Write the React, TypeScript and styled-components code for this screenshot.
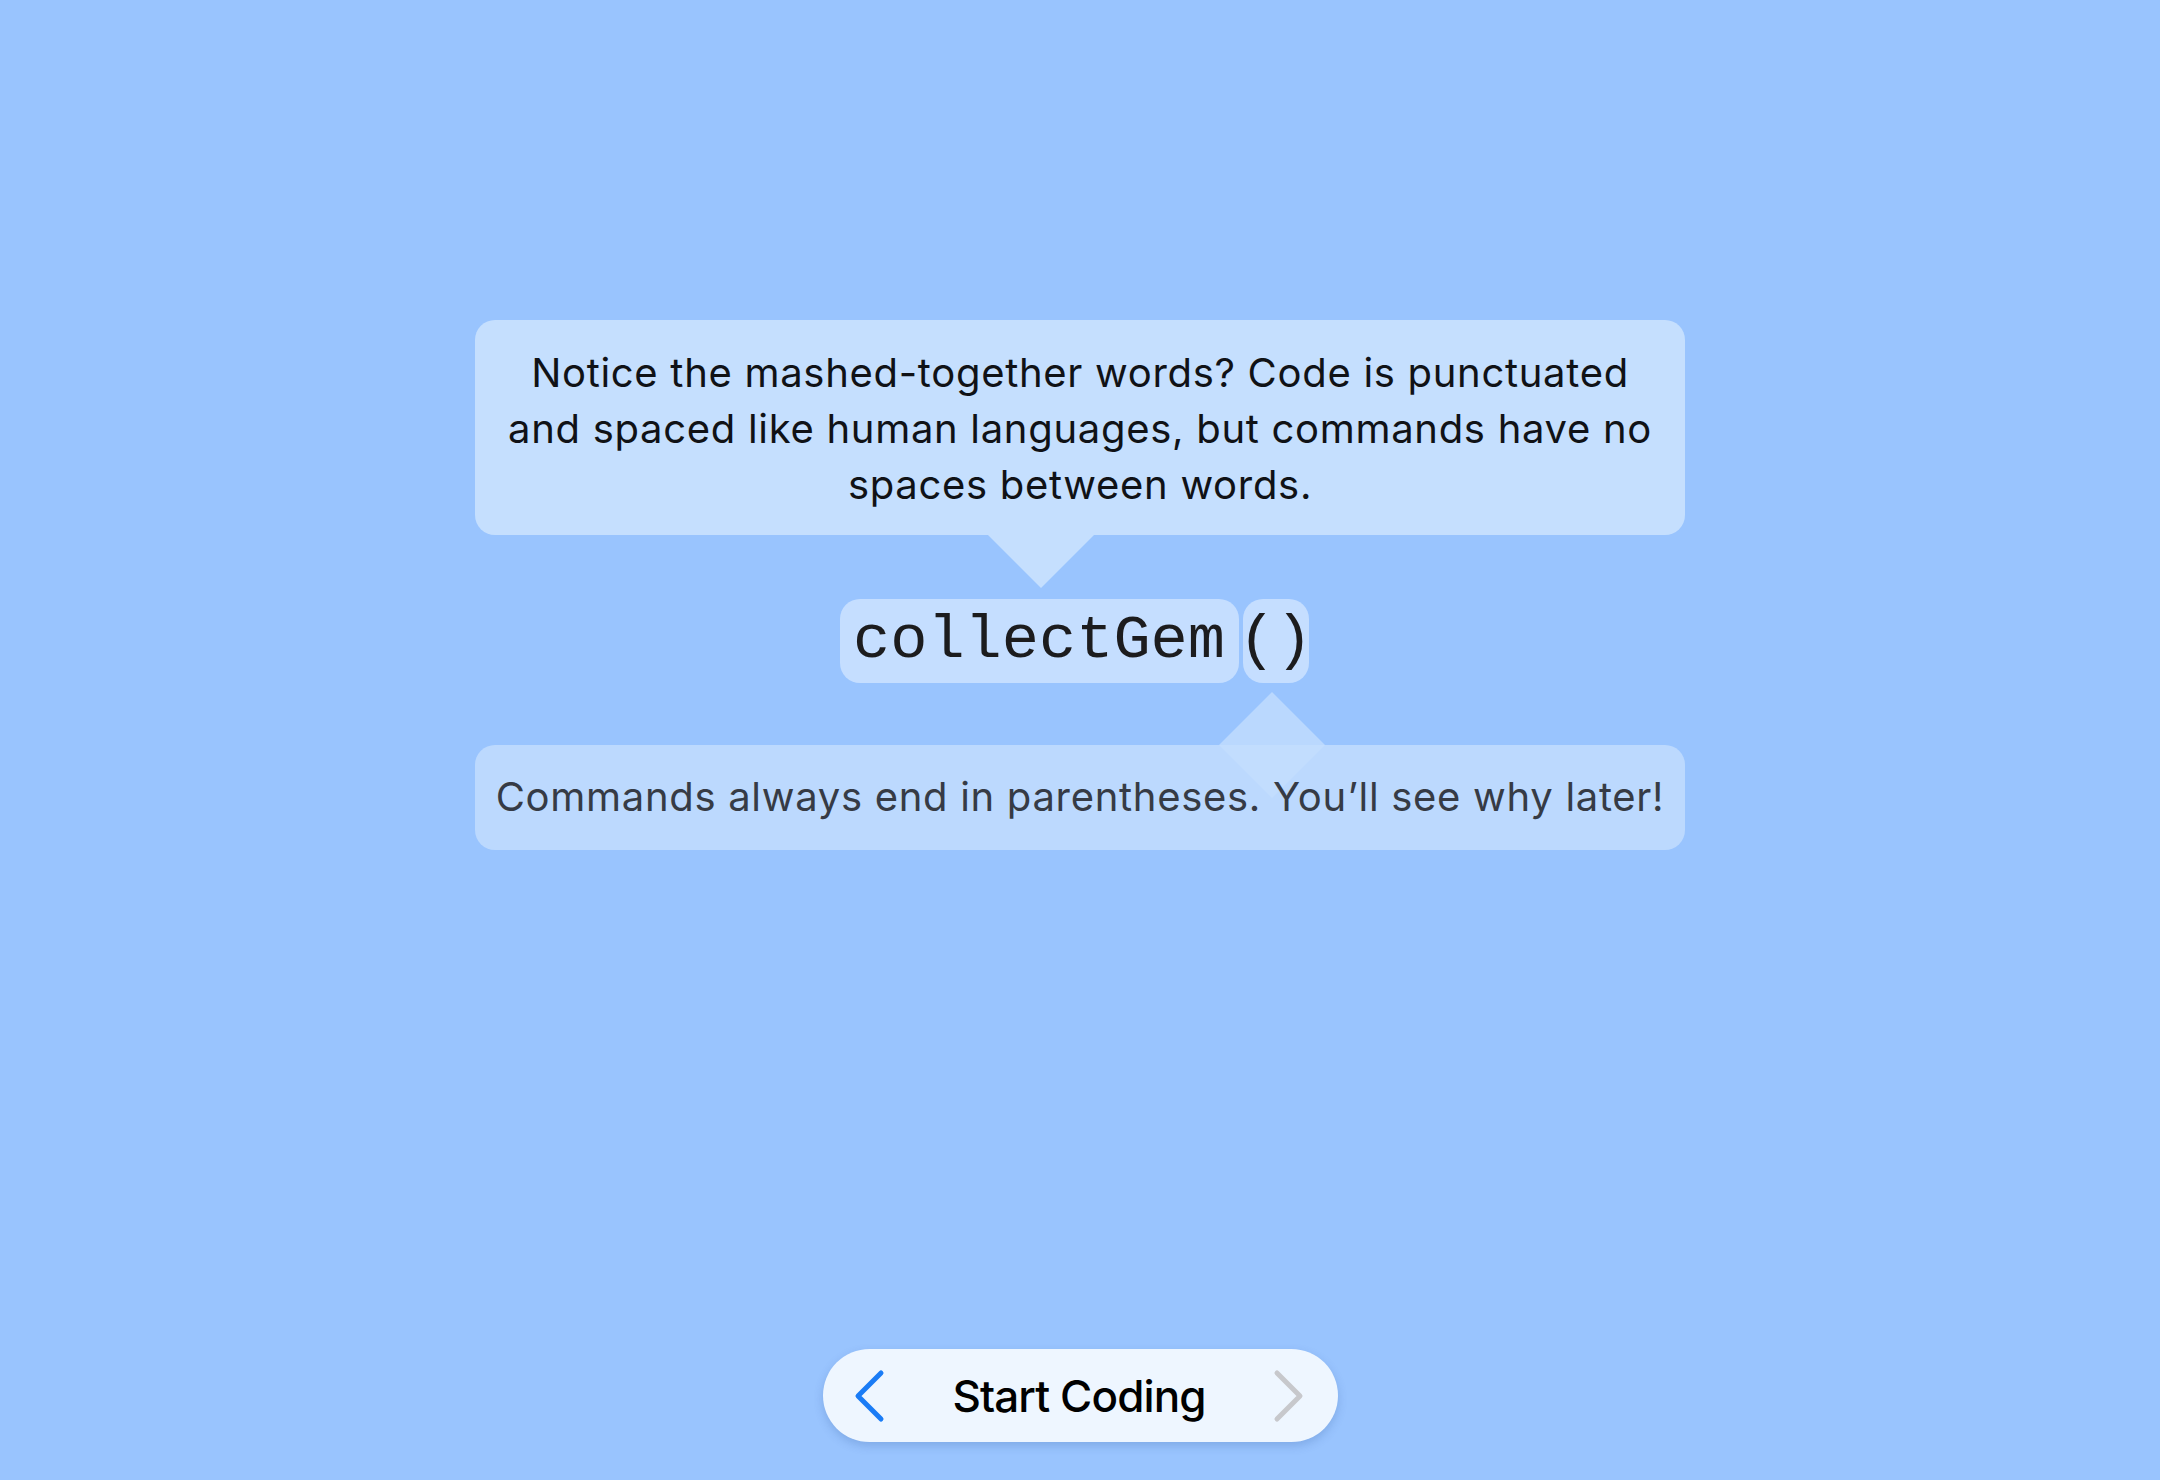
import React from "react";
import styled, { createGlobalStyle } from "styled-components";

const GlobalStyle = createGlobalStyle`
  html, body {
    margin: 0;
    padding: 0;
    background: #99c4fe;
  }
  * { box-sizing: border-box; }
`;

const Page = styled.div`
  height: 1480px;
  display: flex;
  flex-direction: column;
  align-items: center;
  padding-top: 320px;
  padding-bottom: 38px;
  font-family: Inter, "Noto Sans", sans-serif;
`;

const Bubble = styled.div<{ $tone: "top" | "bottom" }>`
  position: relative;
  width: 1210px;
  border-radius: 20px;
  background: ${(p) => (p.$tone === "top" ? "#c5dffe" : "#bcd9fe")};
  color: ${(p) => (p.$tone === "top" ? "#101216" : "#363b45")};
  font-size: 40px;
  letter-spacing: 0.7px;
  line-height: 56px;
  text-align: center;
  white-space: nowrap;
  padding: ${(p) => (p.$tone === "top" ? "25px 10px 22px" : "24px 10px 25px")};
`;

const BubbleText = styled.span`
  position: relative;
  z-index: 1;
`;

const PointerDown = styled.div<{ $left: number }>`
  position: absolute;
  top: 100%;
  left: ${(p) => p.$left}px;
  width: 106px;
  height: 53px;
  margin-left: -53px;
  background: #c5dffe;
  clip-path: polygon(0 0, 100% 0, 50% 100%);
`;

const PointerUp = styled.div<{ $left: number }>`
  position: absolute;
  top: -53px;
  left: ${(p) => p.$left}px;
  width: 106px;
  height: 106px;
  margin-left: -53px;
  pointer-events: none;
  &::before,
  &::after {
    content: "";
    position: absolute;
    left: 0;
    width: 106px;
    height: 53px;
  }
  &::before {
    top: 0;
    background: #bad8fe;
    clip-path: polygon(50% 0, 100% 100%, 0 100%);
  }
  &::after {
    top: 53px;
    background: #c2ddfe;
    clip-path: polygon(0 0, 100% 0, 50% 100%);
  }
`;

const CodeRow = styled.div`
  display: flex;
  gap: 4px;
  margin: 64px 12px 62px 0;
`;

const CodeChip = styled.div<{ $w: number }>`
  width: ${(p) => p.$w}px;
  height: 84px;
  border-radius: 20px;
  background: #c5deff;
  display: flex;
  align-items: center;
  justify-content: center;
  font-family: "Liberation Mono", "Courier New", monospace;
  font-size: 62px;
  line-height: 84px;
  color: #1c1c1e;
  white-space: nowrap;
`;

const Spacer = styled.div`
  flex: 1;
`;

const NavPill = styled.div`
  width: 515px;
  height: 93px;
  border-radius: 47px;
  background: #eef6ff;
  box-shadow: 0 4px 10px rgba(40, 80, 150, 0.22);
  display: flex;
  align-items: center;
  justify-content: space-between;
  padding: 0 33px 0 31px;
`;

const NavLabel = styled.span`
  font-family: Inter, "Noto Sans", sans-serif;
  font-size: 44px;
  letter-spacing: -0.9px;
  color: #000;
  font-weight: 450;
`;

const Chevron = ({ dir, color }: { dir: "left" | "right"; color: string }) => (
  <svg width="32" height="54" viewBox="0 0 32 54">
    <polyline
      points={dir === "left" ? "27,4 4,27 27,50" : "5,4 28,27 5,50"}
      fill="none"
      stroke={color}
      strokeWidth="5"
      strokeLinecap="round"
      strokeLinejoin="round"
    />
  </svg>
);

export default function App() {
  return (
    <>
      <GlobalStyle />
      <Page>
        <Bubble $tone="top">
          <BubbleText>
            Notice the mashed-together words? Code is punctuated
            <br />
            and spaced like human languages, but commands have no
            <br />
            spaces between words.
          </BubbleText>
          <PointerDown $left={566} />
        </Bubble>
        <CodeRow>
          <CodeChip $w={399}>collectGem</CodeChip>
          <CodeChip $w={66}>()</CodeChip>
        </CodeRow>
        <Bubble $tone="bottom">
          <PointerUp $left={797} />
          <BubbleText>
            Commands always end in parentheses. You’ll see why later!
          </BubbleText>
        </Bubble>
        <Spacer />
        <NavPill>
          <Chevron dir="left" color="#1a7cf6" />
          <NavLabel>Start Coding</NavLabel>
          <Chevron dir="right" color="#c7c8cc" />
        </NavPill>
      </Page>
    </>
  );
}
